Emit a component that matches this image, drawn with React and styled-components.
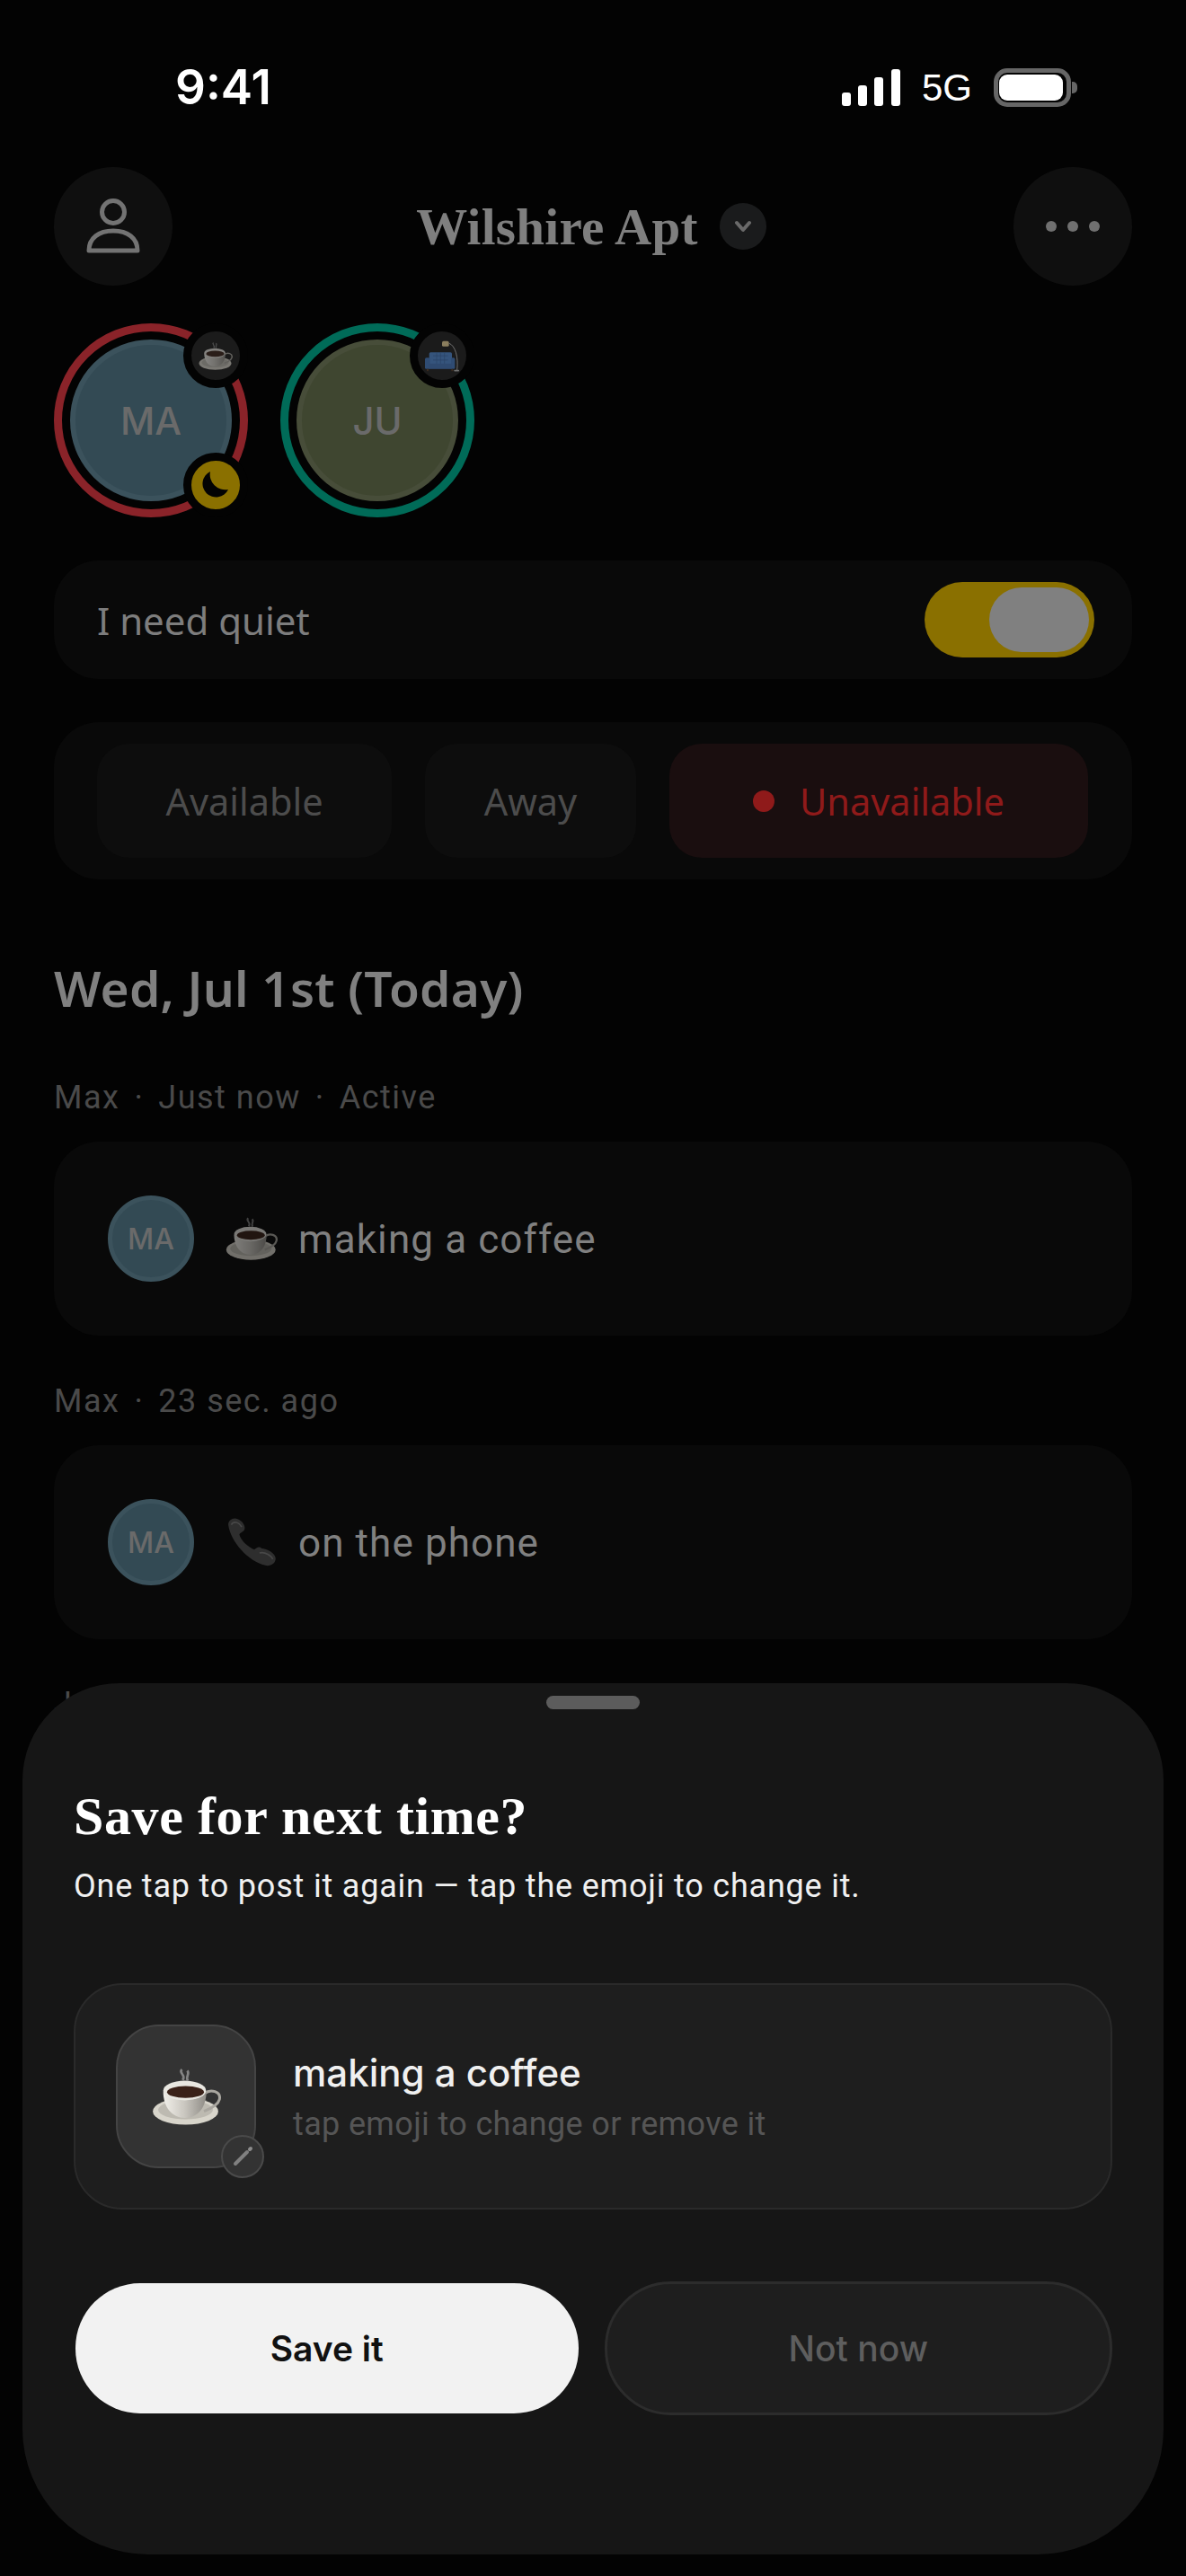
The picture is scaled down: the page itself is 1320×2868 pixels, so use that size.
import React from "react";
import styled, { createGlobalStyle } from "styled-components";

const GlobalStyle = createGlobalStyle`
  * { box-sizing: border-box; }
  html, body { margin: 0; background: #030303; }
  body { font-family: "Inter", "Noto Sans", sans-serif; }
`;

const Page = styled.div`
  position: relative;
  width: 1320px;
  height: 2868px;
  overflow: hidden;
  padding: 0 60px;
  background: #030303;
`;

const StatusBar = styled.div`
  display: flex;
  align-items: center;
  justify-content: space-between;
  height: 186px;
  padding: 8px 68px 0 135px;
`;

const Clock = styled.div`
  font-family: "Inter", sans-serif;
  font-weight: 600;
  font-size: 53px;
  color: #fff;
`;

const StatusIcons = styled.div`
  display: flex;
  align-items: center;
  gap: 24px;
`;

const NetLabel = styled.div`
  font-family: "Liberation Sans", sans-serif;
  font-size: 42px;
  line-height: 43px;
  color: #fff;
`;

const Battery = styled.div`
  position: relative;
  width: 86px;
  height: 43px;
  border: 5px solid #666;
  border-radius: 15px;
  padding: 2px 4px 2px 1px;

  &::after {
    content: "";
    position: absolute;
    left: 82px;
    top: 10px;
    width: 6px;
    height: 13px;
    border-radius: 0 5px 5px 0;
    background: #666;
  }
`;

const BatteryFill = styled.div`
  width: 100%;
  height: 100%;
  border-radius: 9px;
  background: #fff;
`;

const Header = styled.div`
  display: flex;
  align-items: center;
  justify-content: space-between;
  height: 132px;
`;

const RoundButton = styled.div`
  display: flex;
  align-items: center;
  justify-content: center;
  gap: 12px;
  width: 132px;
  height: 132px;
  border-radius: 50%;
  background: #0f0f0f;
`;

const Dot = styled.span`
  width: 12px;
  height: 12px;
  border-radius: 50%;
  background: #707070;
`;

const HomeTitle = styled.div`
  display: flex;
  align-items: center;
  gap: 24px;
  margin-right: 4px;
`;

const HomeName = styled.span`
  font-family: "Liberation Serif", serif;
  font-weight: 700;
  font-size: 57px;
  letter-spacing: 0.3px;
  color: #7f7f7f;
`;

const ChevronWrap = styled.span`
  display: flex;
  align-items: center;
  justify-content: center;
  width: 52px;
  height: 52px;
  border-radius: 50%;
  background: #1a1b1c;
`;

const People = styled.div`
  display: flex;
  gap: 36px;
  margin-top: 42px;
`;

const Ring = styled.div`
  position: relative;
  width: 216px;
  height: 216px;
  padding: 9px;
  border: 9px solid ${(p) => p.$color};
  border-radius: 50%;
`;

const Avatar = styled.div`
  display: flex;
  align-items: center;
  justify-content: center;
  width: ${(p) => p.$size}px;
  height: ${(p) => p.$size}px;
  flex: none;
  border-radius: 50%;
  border: ${(p) => (p.$size > 100 ? 6 : 5)}px solid ${(p) => p.$edge};
  background: ${(p) => p.$fill};
  font-weight: 500;
  font-size: ${(p) => (p.$size > 100 ? 42 : 32)}px;
  color: #6a6a6a;
`;

const Badge = styled.div`
  position: absolute;
  right: -9px;
  ${(p) => (p.$bottom ? "bottom: -9px;" : "top: -9px;")}
  display: flex;
  align-items: center;
  justify-content: center;
  width: 72px;
  height: 72px;
  border: 9px solid #030303;
  border-radius: 50%;
  background: ${(p) => p.$fill};
`;

const QuietCard = styled.div`
  display: flex;
  align-items: center;
  justify-content: space-between;
  height: 132px;
  margin-top: 48px;
  padding: 0 42px 0 48px;
  border-radius: 50px;
  background: #090909;
`;

const QuietLabel = styled.span`
  font-family: "Noto Sans", sans-serif;
  font-size: 42px;
  color: #7d7d7d;
`;

const Toggle = styled.div`
  display: flex;
  justify-content: flex-end;
  width: 189px;
  height: 84px;
  padding: 6px;
  border-radius: 42px;
  background: #8a7000;
`;

const Thumb = styled.div`
  width: 111px;
  height: 72px;
  border-radius: 36px;
  background: #808080;
`;

const Segments = styled.div`
  display: flex;
  gap: 37px;
  height: 175px;
  margin-top: 48px;
  padding: 24px 48px;
  border-radius: 50px;
  background: #090909;
`;

const Segment = styled.div`
  display: flex;
  align-items: center;
  justify-content: center;
  gap: 28px;
  width: ${(p) => p.$width}px;
  height: 127px;
  flex: none;
  border-radius: 36px;
  background: ${(p) => (p.$active ? "#1a0e0f" : "#0d0d0d")};
  font-family: "Noto Sans", sans-serif;
  font-size: 41.5px;
  color: ${(p) => (p.$active ? "#8f1a1a" : "#4c4c4c")};
`;

const RedDot = styled.span`
  width: 24px;
  height: 24px;
  border-radius: 50%;
  background: #8f1a1a;
`;

const DayHeading = styled.h2`
  margin: 91px 0 0;
  font-family: "Noto Sans", sans-serif;
  font-weight: 600;
  font-size: 55px;
  line-height: 60px;
  letter-spacing: 0.2px;
  color: #808080;
`;

const Meta = styled.div`
  display: flex;
  align-items: center;
  gap: 16px;
  height: 44px;
  margin-top: ${(p) => p.$top}px;
  font-family: "Roboto", sans-serif;
  font-size: 36px;
  letter-spacing: 1.5px;
  color: #4a4a4a;
`;

const ActivityCard = styled.div`
  display: flex;
  align-items: center;
  height: 216px;
  margin-top: 27px;
  padding-left: 60px;
  border-radius: 50px;
  background: #090909;
`;

const ActivityEmoji = styled.span`
  display: flex;
  align-items: center;
  justify-content: center;
  width: 60px;
  margin: 0 22px 0 34px;
`;

const ActivityText = styled.span`
  padding-top: 2px;
  font-family: "Roboto", sans-serif;
  font-size: 44px;
  letter-spacing: 1.1px;
  color: #808080;
`;

const Sheet = styled.div`
  position: absolute;
  left: 25px;
  bottom: 24px;
  width: 1270px;
  height: 970px;
  padding: 14px 57px 0;
  border-radius: 108px 108px 140px 140px;
  background: #161616;
`;

const Handle = styled.div`
  width: 104px;
  height: 15px;
  margin: 0 auto;
  border-radius: 8px;
  background: #5c5c5c;
`;

const SheetTitle = styled.h1`
  margin: 84px 0 0;
  font-family: "Liberation Serif", serif;
  font-weight: 700;
  font-size: 60px;
  line-height: 70px;
  letter-spacing: 0.6px;
  color: #fff;
`;

const SheetSub = styled.p`
  margin: 18px 0 0;
  font-family: "Roboto", sans-serif;
  font-size: 36px;
  line-height: 50px;
  letter-spacing: 0.8px;
  color: #f0f0f0;
`;

const PreviewCard = styled.div`
  display: flex;
  align-items: center;
  height: 252px;
  margin-top: 83px;
  padding-left: 45px;
  border: 2px solid #2a2a2a;
  border-radius: 54px;
  background: #1e1e1e;
`;

const EmojiTile = styled.div`
  position: relative;
  display: flex;
  align-items: center;
  justify-content: center;
  width: 156px;
  height: 160px;
  flex: none;
  border: 2px solid #444;
  border-radius: 48px;
  background: #333;
`;

const EditBadge = styled.div`
  position: absolute;
  right: -11px;
  bottom: -13px;
  display: flex;
  align-items: center;
  justify-content: center;
  width: 48px;
  height: 48px;
  border: 2px solid #4a4a4a;
  border-radius: 50%;
  background: #333;
`;

const PreviewText = styled.div`
  display: flex;
  flex-direction: column;
  gap: 11px;
  margin-left: 41px;
  padding-top: 2px;
`;

const PreviewTitle = styled.div`
  font-family: "Inter", sans-serif;
  font-weight: 500;
  font-size: 42px;
  line-height: 48px;
  color: #f0f0f0;
`;

const PreviewHint = styled.div`
  font-family: "Roboto", sans-serif;
  font-size: 36px;
  line-height: 44px;
  letter-spacing: 0.35px;
  color: #555;
`;

const Buttons = styled.div`
  display: flex;
  align-items: center;
  gap: 29px;
  margin-top: 80px;
  padding-left: 2px;
`;

const SaveButton = styled.button`
  width: 560px;
  height: 145px;
  border: 0;
  border-radius: 72px;
  background: #f2f2f2;
  font-family: "Inter", sans-serif;
  font-weight: 600;
  font-size: 39px;
  color: #111;
`;

const SkipButton = styled.button`
  width: 566px;
  height: 149px;
  border: 3px solid #2c2c2c;
  border-radius: 74px;
  background: #1e1e1e;
  font-family: "Inter", sans-serif;
  font-weight: 500;
  font-size: 39px;
  color: #5e5e5e;
`;

const UserIcon = () => (
  <svg width="60" height="62" viewBox="0 0 60 62" fill="none" stroke="#737373" strokeWidth="5">
    <circle cx="30" cy="15" r="12.5" />
    <path d="M3 58 C3 44 14 36 30 36 C46 36 57 44 57 58 Z" strokeLinejoin="round" />
  </svg>
);

const Chevron = () => (
  <svg width="28" height="28" viewBox="0 0 28 28" fill="none" stroke="#6a6a6a" strokeWidth="4" strokeLinecap="round" strokeLinejoin="round">
    <path d="M7 10 L14 18 L21 10" />
  </svg>
);

const Signal = () => (
  <svg width="65" height="41" viewBox="0 0 65 41" fill="#fff">
    <rect x="0" y="26" width="10" height="15" rx="3" />
    <rect x="18" y="18" width="10" height="23" rx="3" />
    <rect x="36" y="9" width="10" height="32" rx="3" />
    <rect x="55" y="0" width="10" height="41" rx="3" />
  </svg>
);

const Moon = () => (
  <svg width="32" height="32" viewBox="0 -1 32 32" fill="#030303">
    <path d="M10 0 A15 15 0 1 0 30 20 A17 17 0 0 1 10 0 Z" />
  </svg>
);

const Pencil = () => (
  <svg width="24" height="24" viewBox="0 0 24 24" fill="none" strokeLinecap="round">
    <path d="M4 20 L17 7" stroke="#808080" strokeWidth="4" />
    <path d="M20 4 L21 3" stroke="#8c8c8c" strokeWidth="4" />
  </svg>
);

// the emoji font isn't available, so the three emoji are drawn
const Coffee = ({ width, dim }) => (
  <svg width={width} height={width * 0.86} viewBox="195 235 232 200" opacity={dim ? 0.5 : 1}>
    <defs>
      <linearGradient id="cupBody" x1="0" x2="1" y1="0" y2="0">
        <stop offset="0" stopColor="#f2f0ea" />
        <stop offset="0.5" stopColor="#c9c6bf" />
        <stop offset="1" stopColor="#8f8c86" />
      </linearGradient>
    </defs>
    <ellipse cx="308" cy="385" rx="110" ry="45" fill="#d8d5cb" />
    <ellipse cx="308" cy="380" rx="92" ry="32" fill="#bdbab1" />
    <path d="M372 325 C392 308 428 318 422 345 C418 362 395 375 370 385" fill="none" stroke="#a9a69f" strokeWidth="9" />
    <path d="M233 318 C233 370 262 407 306 407 C350 407 378 370 378 318 Z" fill="url(#cupBody)" />
    <ellipse cx="305" cy="315" rx="72" ry="33" fill="#e9e7e1" />
    <ellipse cx="308" cy="320" rx="62" ry="20" fill="#3a2118" />
    <path d="M296 244 C282 256 312 262 298 280 M314 248 C324 260 306 268 316 282" fill="none" stroke="#a0a0a0" strokeWidth="8" opacity="0.75" />
  </svg>
);

const Phone = () => (
  <svg width="56" height="56" viewBox="455 25 175 175">
    <path d="M462 55 C458 38 478 24 494 32 C510 38 522 55 518 68 C514 78 503 78 500 86 C504 105 530 130 552 138 C560 134 566 124 578 134 C595 134 625 150 626 168 C628 186 606 198 590 193 C530 180 470 110 462 55 Z" fill="#2e2e2e" />
    <path d="M472 52 C480 38 498 42 508 60 M570 150 C590 145 612 160 616 172" fill="none" stroke="#484848" strokeWidth="5" />
  </svg>
);

const Sofa = () => (
  <svg width="40" height="37" viewBox="95 80 120 110">
    <rect x="155" y="85" width="23" height="18" rx="5" fill="#8b7e5e" />
    <path d="M178 92 C200 100 210 140 205 182" fill="none" stroke="#6e6e6e" strokeWidth="3" />
    <rect x="195" y="181" width="17" height="5" rx="2" fill="#6e6e6e" />
    <rect x="112" y="122" width="76" height="40" rx="5" fill="#35547c" />
    <path d="M125 134 H175 M125 148 H175 M137 124 V160 M150 124 V160 M163 124 V160" stroke="#2a4365" strokeWidth="2" />
    <rect x="98" y="140" width="17" height="38" rx="5" fill="#2f4c73" />
    <rect x="185" y="140" width="13" height="38" rx="5" fill="#2f4c73" />
    <rect x="112" y="160" width="76" height="18" fill="#2f4a70" />
    <rect x="104" y="178" width="6" height="7" fill="#3a2a1e" />
    <rect x="186" y="178" width="6" height="7" fill="#3a2a1e" />
  </svg>
);

const App = () => (
  <Page>
    <GlobalStyle />
    <StatusBar>
      <Clock>9:41</Clock>
      <StatusIcons>
        <Signal />
        <NetLabel>5G</NetLabel>
        <Battery>
          <BatteryFill />
        </Battery>
      </StatusIcons>
    </StatusBar>

    <Header>
      <RoundButton>
        <UserIcon />
      </RoundButton>
      <HomeTitle>
        <HomeName>Wilshire Apt</HomeName>
        <ChevronWrap>
          <Chevron />
        </ChevronWrap>
      </HomeTitle>
      <RoundButton>
        <Dot />
        <Dot />
        <Dot />
      </RoundButton>
    </Header>

    <People>
      <Ring $color="#8a2329">
        <Avatar $size={180} $fill="#334a54" $edge="#3b525c">MA</Avatar>
        <Badge $fill="#1b1b1b">
          <Coffee width={38} dim />
        </Badge>
        <Badge $bottom $fill="#8a7000">
          <Moon />
        </Badge>
      </Ring>
      <Ring $color="#006b58">
        <Avatar $size={180} $fill="#3f4630" $edge="#474d39">JU</Avatar>
        <Badge $fill="#1b1b1b">
          <Sofa />
        </Badge>
      </Ring>
    </People>

    <QuietCard>
      <QuietLabel>I need quiet</QuietLabel>
      <Toggle>
        <Thumb />
      </Toggle>
    </QuietCard>

    <Segments>
      <Segment $width={328}>Available</Segment>
      <Segment $width={235}>Away</Segment>
      <Segment $width={466} $active>
        <RedDot />
        Unavailable
      </Segment>
    </Segments>

    <DayHeading>Wed, Jul 1st (Today)</DayHeading>

    <Meta $top={70}>
      <span>Max</span>
      <span>·</span>
      <span>Just now</span>
      <span>·</span>
      <span>Active</span>
    </Meta>
    <ActivityCard>
      <Avatar $size={96} $fill="#334a54" $edge="#3b525c">MA</Avatar>
      <ActivityEmoji>
        <Coffee width={58} dim />
      </ActivityEmoji>
      <ActivityText>making a coffee</ActivityText>
    </ActivityCard>

    <Meta $top={51}>
      <span>Max</span>
      <span>·</span>
      <span>23 sec. ago</span>
    </Meta>
    <ActivityCard>
      <Avatar $size={96} $fill="#334a54" $edge="#3b525c">MA</Avatar>
      <ActivityEmoji>
        <Phone />
      </ActivityEmoji>
      <ActivityText>on the phone</ActivityText>
    </ActivityCard>

    <Meta $top={50}>
      <span>Ju</span>
    </Meta>

    <Sheet>
      <Handle />
      <SheetTitle>Save for next time?</SheetTitle>
      <SheetSub>One tap to post it again — tap the emoji to change it.</SheetSub>
      <PreviewCard>
        <EmojiTile>
          <Coffee width={77} />
          <EditBadge>
            <Pencil />
          </EditBadge>
        </EmojiTile>
        <PreviewText>
          <PreviewTitle>making a coffee</PreviewTitle>
          <PreviewHint>tap emoji to change or remove it</PreviewHint>
        </PreviewText>
      </PreviewCard>
      <Buttons>
        <SaveButton>Save it</SaveButton>
        <SkipButton>Not now</SkipButton>
      </Buttons>
    </Sheet>
  </Page>
);

export default App;
